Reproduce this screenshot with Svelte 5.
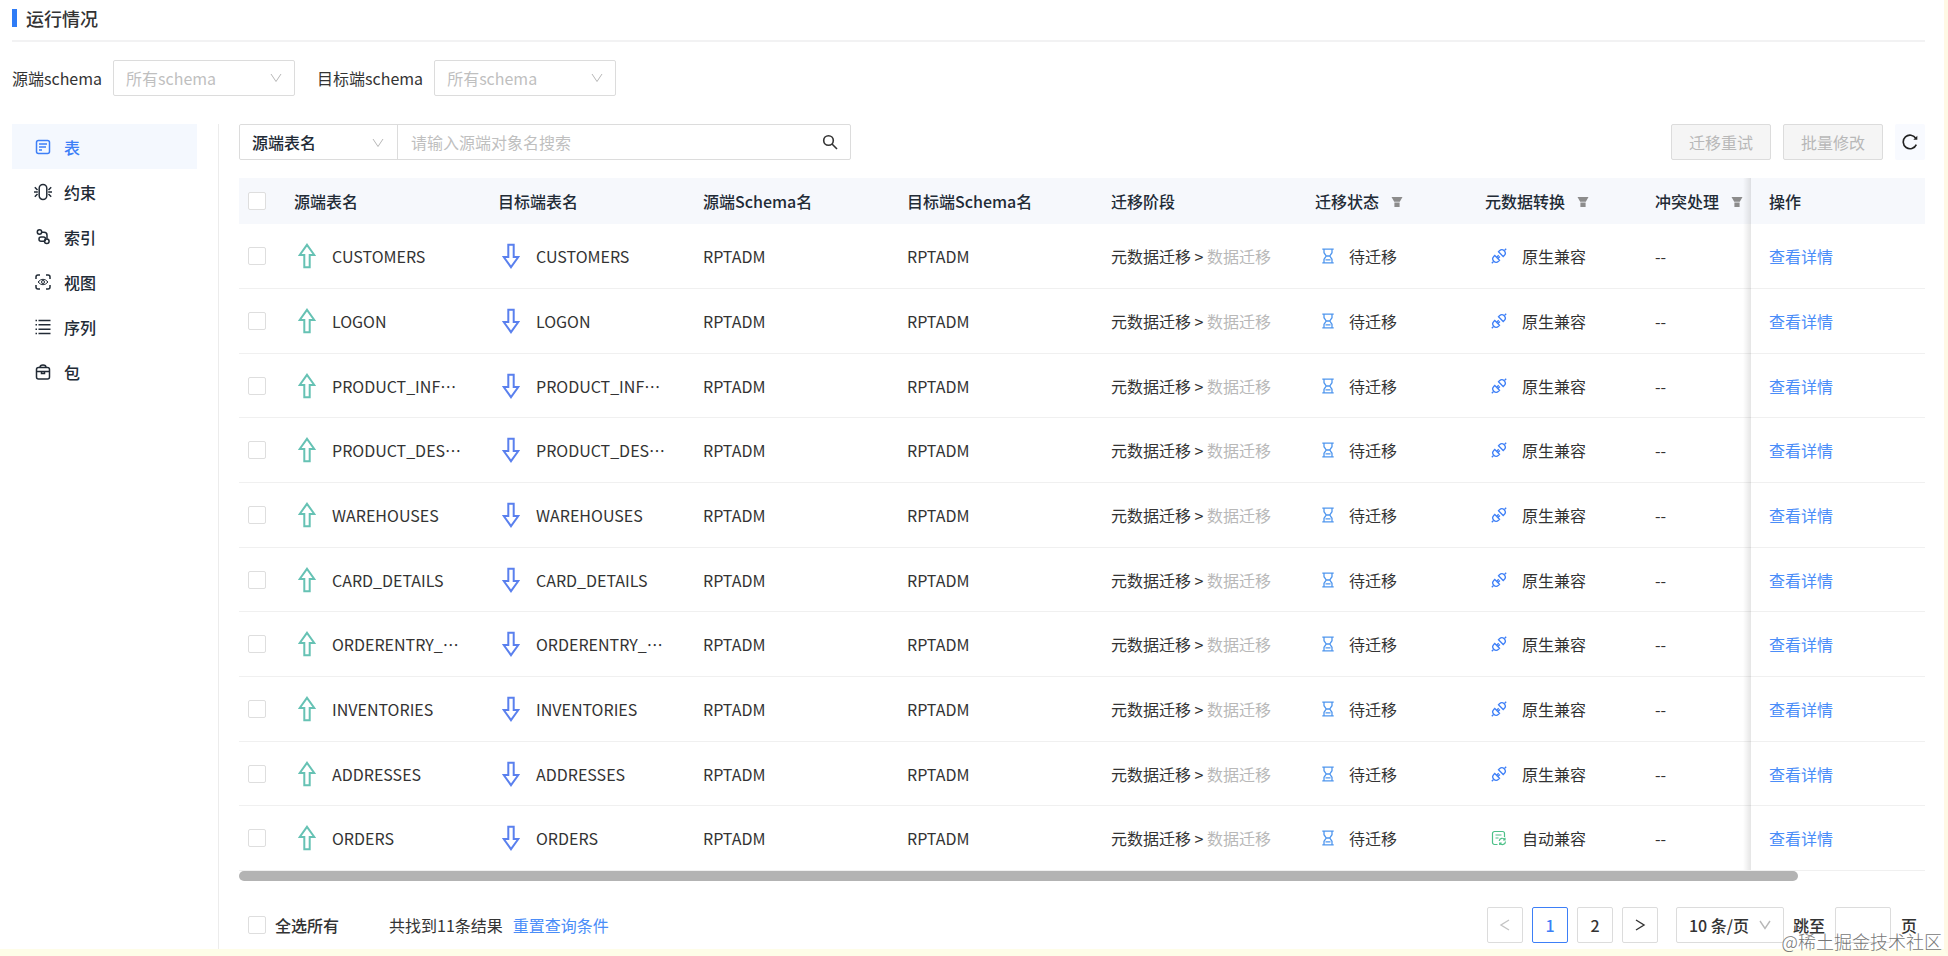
<script lang="ts">
	const menu = [
		{ key: 'table', label: '表' },
		{ key: 'constraint', label: '约束' },
		{ key: 'index', label: '索引' },
		{ key: 'view', label: '视图' },
		{ key: 'sequence', label: '序列' },
		{ key: 'package', label: '包' }
	];

	const rows = [
		{ name: 'CUSTOMERS', auto: false },
		{ name: 'LOGON', auto: false },
		{ name: 'PRODUCT_INF…', auto: false },
		{ name: 'PRODUCT_DES…', auto: false },
		{ name: 'WAREHOUSES', auto: false },
		{ name: 'CARD_DETAILS', auto: false },
		{ name: 'ORDERENTRY_…', auto: false },
		{ name: 'INVENTORIES', auto: false },
		{ name: 'ADDRESSES', auto: false },
		{ name: 'ORDERS', auto: true }
	];

	let active = $state('table');
	let page = $state(1);
	let keyword = $state('');
	let allChecked = $state(false);
</script>

{#snippet chevron()}
	<svg class="chevron" viewBox="0 0 12 12" width="12" height="12" aria-hidden="true">
		<path d="M1 2l5 7.500 5-7.500" />
	</svg>
{/snippet}

{#snippet funnel()}
	<svg class="funnel" viewBox="0 0 12 12" width="12" height="12" aria-hidden="true">
		<path d="M.5 1h11L8.800 5.800H3.200zM3.400 6.500h5.200V11H3.400z" />
	</svg>
{/snippet}

<div class="page" lang="zh-CN">
	<h1>运行情况</h1>

	<div class="filters">
		<label for="source-schema">源端schema</label>
		<span class="select">
			<select id="source-schema" class="empty"><option>所有schema</option></select>
			{@render chevron()}
		</span>
		<label for="target-schema">目标端schema</label>
		<span class="select">
			<select id="target-schema" class="empty"><option>所有schema</option></select>
			{@render chevron()}
		</span>
	</div>

	<div class="body">
		<nav>
			{#each menu as item}
				<button class:active={active === item.key} onclick={() => (active = item.key)}>
					<svg viewBox="0 0 18 18" width="18" height="18" aria-hidden="true">
						{#if item.key === 'table'}
							<rect x="2.500" y="2.500" width="13" height="13" rx="2" />
							<path d="M5 6h8M5 9h7M5 12h3" />
						{:else if item.key === 'constraint'}
							<rect x="5.200" y="1.500" width="7.600" height="15" rx="3.800" />
							<path d="M.8 4.300l2.700 2.700M0 9h3.800M.8 13.700l2.700-2.700M17.200 4.300L14.500 7M18 9h-3.800M17.200 13.700l-2.700-2.700" />
						{:else if item.key === 'index'}
							<circle cx="5.500" cy="4" r="2.200" />
							<path d="M7.700 4.200H10a3 3 0 0 1 3 3v3.500" />
							<rect x="5" y="9" width="6.500" height="4.200" rx="2" />
							<circle cx="12.800" cy="13.300" r="2.300" />
						{:else if item.key === 'view'}
							<path d="M2 6V4a2 2 0 0 1 2-2h2M12 2h2a2 2 0 0 1 2 2v2M16 12v2a2 2 0 0 1-2 2h-2M6 16H4a2 2 0 0 1-2-2v-2" />
							<path class="thin" d="M4 9q5-5.500 10 0q-5 5.500-10 0z" />
							<circle class="thin" cx="9" cy="9" r="1.500" />
						{:else if item.key === 'sequence'}
							<path d="M4.500 2.500h12M4.500 6.800h12M4.500 11.200h12M4.500 15.500h12M1.500 2.500H3M1.500 6.800H3M1.500 11.200H3M1.500 15.500H3" />
						{:else}
							<rect x="2.500" y="4.500" width="13" height="11.500" rx="2" />
							<path d="M6 4.500a3 2.500 0 0 1 6 0M2.500 8.500h13M7.500 8.500v2h3v-2" />
						{/if}
					</svg>
					{item.label}
				</button>
			{/each}
		</nav>

		<main>
			<div class="toolbar">
				<div class="search">
					<span class="select field">
						<select aria-label="搜索字段"><option>源端表名</option></select>
						{@render chevron()}
					</span>
					<input type="text" aria-label="搜索" placeholder="请输入源端对象名搜索" bind:value={keyword} />
					<button class="find" aria-label="搜索">
						<svg viewBox="0 0 16 16" width="16" height="16" aria-hidden="true">
							<circle cx="6.500" cy="6.500" r="4.800" />
							<path d="M10 10l5 5" />
						</svg>
					</button>
				</div>
				<div class="actions">
					<button disabled>迁移重试</button>
					<button disabled>批量修改</button>
					<button class="refresh" aria-label="刷新">
						<svg viewBox="0 0 16 16" width="16" height="16" aria-hidden="true">
							<path d="M13.900 4.500A6.800 6.800 0 1 0 14.300 10.600" />
							<path class="tip" d="M15.300 1.800v4h-4z" />
						</svg>
					</button>
				</div>
			</div>

			<table>
				<colgroup>
					<col class="c-check" />
					<col class="c-name" /><col class="c-target" /><col class="c-name" /><col class="c-name" /><col class="c-name" />
					<col class="c-state" /><col class="c-state" />
					<col class="c-conflict" />
					<col class="c-action" />
				</colgroup>
				<thead>
					<tr>
						<th class="check"><input type="checkbox" aria-label="全选" bind:checked={allChecked} /></th>
						<th>源端表名</th>
						<th>目标端表名</th>
						<th>源端Schema名</th>
						<th>目标端Schema名</th>
						<th>迁移阶段</th>
						<th>迁移状态{@render funnel()}</th>
						<th>元数据转换{@render funnel()}</th>
						<th>冲突处理{@render funnel()}</th>
						<th class="fixed">操作</th>
					</tr>
				</thead>
				<tbody>
					{#each rows as row}
						<tr>
							<td class="check"><input type="checkbox" aria-label={row.name} checked={allChecked} /></td>
							<td>
								<span class="cell name">
									<svg class="up" viewBox="0 0 18 26" width="18" height="26" aria-hidden="true">
										<path d="M9 1.800L16.300 12H11.700v12.300H6.300V12H1.700z" />
									</svg>
									{row.name}
								</span>
							</td>
							<td>
								<span class="cell name">
									<svg class="down" viewBox="0 0 18 26" width="18" height="26" aria-hidden="true">
										<path d="M9 24.200L16.300 14H11.700V1.700H6.300V14H1.700z" />
									</svg>
									{row.name}
								</span>
							</td>
							<td>RPTADM</td>
							<td>RPTADM</td>
							<td>元数据迁移 &gt; <span class="muted">数据迁移</span></td>
							<td>
								<span class="cell state">
									<svg class="wait" viewBox="0 0 16 16" width="16" height="16" aria-hidden="true">
										<path d="M2.300 1.200h11.400M2.300 14.800h11.400M4 1.200v3.500L6.200 8 4 11.300v3.500M12 1.200v3.500L9.800 8l2.200 3.300v3.500M5.500 11.800h5M6 8h4" />
									</svg>
									待迁移
								</span>
							</td>
							<td>
								<span class="cell compat">
									{#if row.auto}
										<svg class="auto" viewBox="0 0 16 16" width="16" height="16" aria-hidden="true">
											<path d="M6.500 14.500H3.500a2 2 0 0 1-2-2v-9a2 2 0 0 1 2-2h8a2 2 0 0 1 2 2V7M4.500 5h6M4.500 8h3" />
											<path d="M8.200 11a3 3 0 0 1 5.600-1.200M14.500 11.500a3 3 0 0 1-5.600 1.500M14 7.800v2.200h-2M8.700 15v-2h2" />
										</svg>
										自动兼容
									{:else}
										<svg class="link" viewBox="0 0 16 16" width="16" height="16" aria-hidden="true">
											<path d="M.8 15.200l1.700-1.700M13.500 2.500l1.700-1.700" />
											<path d="M3.800 7.500l4.700 4.700-1 1a3.300 3.300 0 0 1-4.700-4.700zM7.500 3.800l4.700 4.700 1-1a3.300 3.300 0 0 0-4.700-4.700zM5.700 9.300l2-2M6.900 10.500l2-2" />
										</svg>
										原生兼容
									{/if}
								</span>
							</td>
							<td>--</td>
							<td class="fixed"><a href="#detail">查看详情</a></td>
						</tr>
					{/each}
				</tbody>
			</table>
			<div class="scrollbar"><div class="thumb"></div></div>

			<footer>
				<label class="all"><input type="checkbox" bind:checked={allChecked} />全选所有</label>
				<span>共找到11条结果</span>
				<a href="#reset">重置查询条件</a>
				<div class="pager">
					<button class="prev" aria-label="上一页" disabled={page === 1} onclick={() => (page = 1)}>
						<svg viewBox="0 0 12 12" width="12" height="12" aria-hidden="true"><path d="M10 1L2 6l8 5" /></svg>
					</button>
					{#each [1, 2] as n}
						<button class:current={page === n} onclick={() => (page = n)}>{n}</button>
					{/each}
					<button aria-label="下一页" onclick={() => (page = 2)}>
						<svg viewBox="0 0 12 12" width="12" height="12" aria-hidden="true"><path d="M2 1l8 5-8 5" /></svg>
					</button>
					<span class="select size">
						<select aria-label="每页条数"><option>10 条/页</option></select>
						{@render chevron()}
					</span>
					<label for="jump">跳至</label>
					<input id="jump" type="text" />
					<span>页</span>
				</div>
			</footer>
		</main>
	</div>
	<div class="watermark">@稀土掘金技术社区</div>
</div>

<style>
:global(body) {
	background: #fff;
}
.page, .page * {
	box-sizing: border-box;
}
.page {
	position: relative;
	padding: 0 19px 0 12px;
	border-right: 4px solid #fff8e5;
	border-bottom: 7px solid #fefde8;
	font: 16px/24px "Noto Sans CJK SC", sans-serif;
	color: #333;
}
button, input, select {
	font: inherit;
	color: inherit;
	margin: 0;
}
button {
	cursor: pointer;
}
svg {
	fill: none;
	stroke: currentColor;
	flex: none;
}
a {
	color: #4a8df8;
	text-decoration: none;
}
h1 {
	display: flex;
	align-items: center;
	height: 42px;
	margin: 0;
	padding-bottom: 5px;
	border-bottom: 2px solid #f2f2f3;
	font-size: 18px;
	font-weight: 500;
}
h1::before {
	content: "";
	width: 5px;
	height: 18px;
	margin-right: 9px;
	background: #2f7cf6;
}
.filters {
	display: flex;
	align-items: center;
	padding: 18px 0 28px;
}
.filters label {
	margin-right: 11px;
}
.filters .select {
	width: 182px;
	margin-right: 22px;
}
.select {
	position: relative;
	display: block;
	height: 36px;
}
.select select {
	appearance: none;
	width: 100%;
	height: 100%;
	padding: 0 30px 0 12px;
	border: 1px solid #dcdcdc;
	border-radius: 2px;
	background: #fff;
}
.select .empty {
	color: #bfbfbf;
}
.chevron {
	position: absolute;
	right: 13px;
	top: 12px;
	stroke: #b8b8b8;
	pointer-events: none;
}
.body {
	display: flex;
}
nav {
	display: flex;
	flex-direction: column;
	flex: 0 0 207px;
	padding-right: 21px;
	border-right: 1px solid #ececec;
}
nav button {
	display: flex;
	align-items: center;
	gap: 12px;
	height: 45px;
	padding: 0 0 0 22px;
	border: 0;
	background: none;
	color: #222b36;
	font-weight: 500;
}
nav svg {
	stroke-width: 1.5;
}
nav .thin {
	stroke-width: 1;
}
nav .active {
	background: #f4f8fe;
	color: #3d7ff7;
}
main {
	flex: 1;
	min-width: 0;
	padding-left: 20px;
}
.toolbar {
	display: flex;
	justify-content: space-between;
	margin-bottom: 18px;
}
.search {
	display: flex;
	width: 612px;
	height: 36px;
	border: 1px solid #dcdcdc;
	border-radius: 2px;
}
.search .field {
	width: 158px;
	height: 34px;
	border-right: 1px solid #dcdcdc;
}
.search select {
	border: 0;
	color: #222b36;
	font-weight: 500;
}
.search input {
	flex: 1;
	min-width: 0;
	padding: 0 13px;
	border: 0;
	outline: 0;
}
.search input::placeholder {
	color: #bfbfbf;
}
.find {
	display: flex;
	align-items: center;
	padding: 0 12px;
	border: 0;
	background: none;
	color: #333;
}
.find svg {
	stroke-width: 1.6;
}
.actions {
	display: flex;
	gap: 12px;
}
.actions button {
	width: 100px;
	height: 36px;
	padding: 0;
	border: 1px solid #dcdcdc;
	border-radius: 2px;
	background: #f5f5f5;
	color: #b8b8b8;
}
.actions .refresh {
	display: flex;
	align-items: center;
	justify-content: center;
	width: 30px;
	border: 0;
	background: #f8faff;
	color: #222;
}
.refresh svg {
	stroke-width: 1.6;
}
.refresh .tip {
	fill: #222;
	stroke: none;
}
table {
	width: 100%;
	table-layout: fixed;
	border-collapse: separate;
	border-spacing: 0;
}
.c-check {
	width: 37px;
}
.c-name {
	width: 204px;
}
.c-target {
	width: 205px;
}
.c-state {
	width: 170px;
}
.c-conflict {
	width: 114px;
}
.c-action {
	width: 174px;
}
th, td {
	padding: 0 0 0 18px;
	text-align: left;
	white-space: nowrap;
}
th {
	height: 46px;
	background: #f6f8fc;
	color: #222b36;
	font-weight: 500;
}
td {
	height: 65px;
	border-bottom: 1px solid #f0f0f0;
}
tr:nth-child(3n) td {
	height: 64px;
}
.check {
	padding-left: 9px;
}
.fixed {
	position: relative;
}
.fixed::before {
	content: "";
	position: absolute;
	top: 0;
	bottom: -1px;
	left: -8px;
	width: 8px;
	background: linear-gradient(to right, rgba(0, 0, 0, 0), rgba(0, 0, 0, 0.1));
}
tr:last-child .fixed::before {
	bottom: 0;
}
input[type="checkbox"] {
	appearance: none;
	display: block;
	width: 18px;
	height: 18px;
	border: 1px solid #dedede;
	border-radius: 2px;
	background: #fff;
}
input[type="checkbox"]:checked {
	background: #3d7ff7;
}
.funnel {
	margin-left: 12px;
	fill: #8c8c8c;
	stroke: none;
}
.cell {
	display: flex;
	align-items: center;
}
.name {
	gap: 16px;
	padding-left: 4px;
}
.name svg {
	stroke-width: 2;
}
.up {
	stroke: #66c2b4;
}
.down {
	stroke: #5a80ee;
}
.state {
	gap: 13px;
	padding-left: 5px;
}
.wait {
	stroke: #4f96ee;
	stroke-width: 1.3;
}
.compat {
	gap: 15px;
	padding-left: 6px;
}
.link {
	stroke: #3d7ff7;
	stroke-width: 1.3;
}
.auto {
	stroke: #4cc088;
	stroke-width: 1.2;
}
.muted {
	color: #b8b8b8;
}
.thumb {
	width: 1559px;
	max-width: 100%;
	height: 10px;
	border-radius: 5px;
	background: #b3b3b3;
}
footer {
	display: flex;
	align-items: center;
	padding: 26px 0 6px 9px;
}
.all {
	display: flex;
	align-items: center;
	gap: 9px;
	margin-right: 50px;
	font-weight: 500;
}
footer a {
	margin-left: 10px;
}
.pager {
	display: flex;
	align-items: center;
	margin-left: auto;
	padding-right: 8px;
	font-weight: 500;
}
.pager button {
	display: flex;
	align-items: center;
	justify-content: center;
	width: 36px;
	height: 36px;
	margin-right: 9px;
	padding: 0;
	border: 1px solid #dcdcdc;
	border-radius: 2px;
	background: #fff;
}
.pager svg {
	stroke-width: 1.4;
}
.pager .prev {
	color: #c4c4c4;
}
.pager .current {
	border-color: #3d7ff7;
	color: #3d7ff7;
}
.pager .size {
	width: 108px;
	margin: 0 9px;
}
.pager input {
	width: 56px;
	height: 36px;
	margin: 0 10px;
	padding: 0 8px;
	border: 1px solid #dcdcdc;
	border-radius: 2px;
}
.watermark {
	position: absolute;
	right: 2px;
	bottom: -4px;
	font-size: 18px;
	font-weight: 300;
	color: #777;
}
</style>
